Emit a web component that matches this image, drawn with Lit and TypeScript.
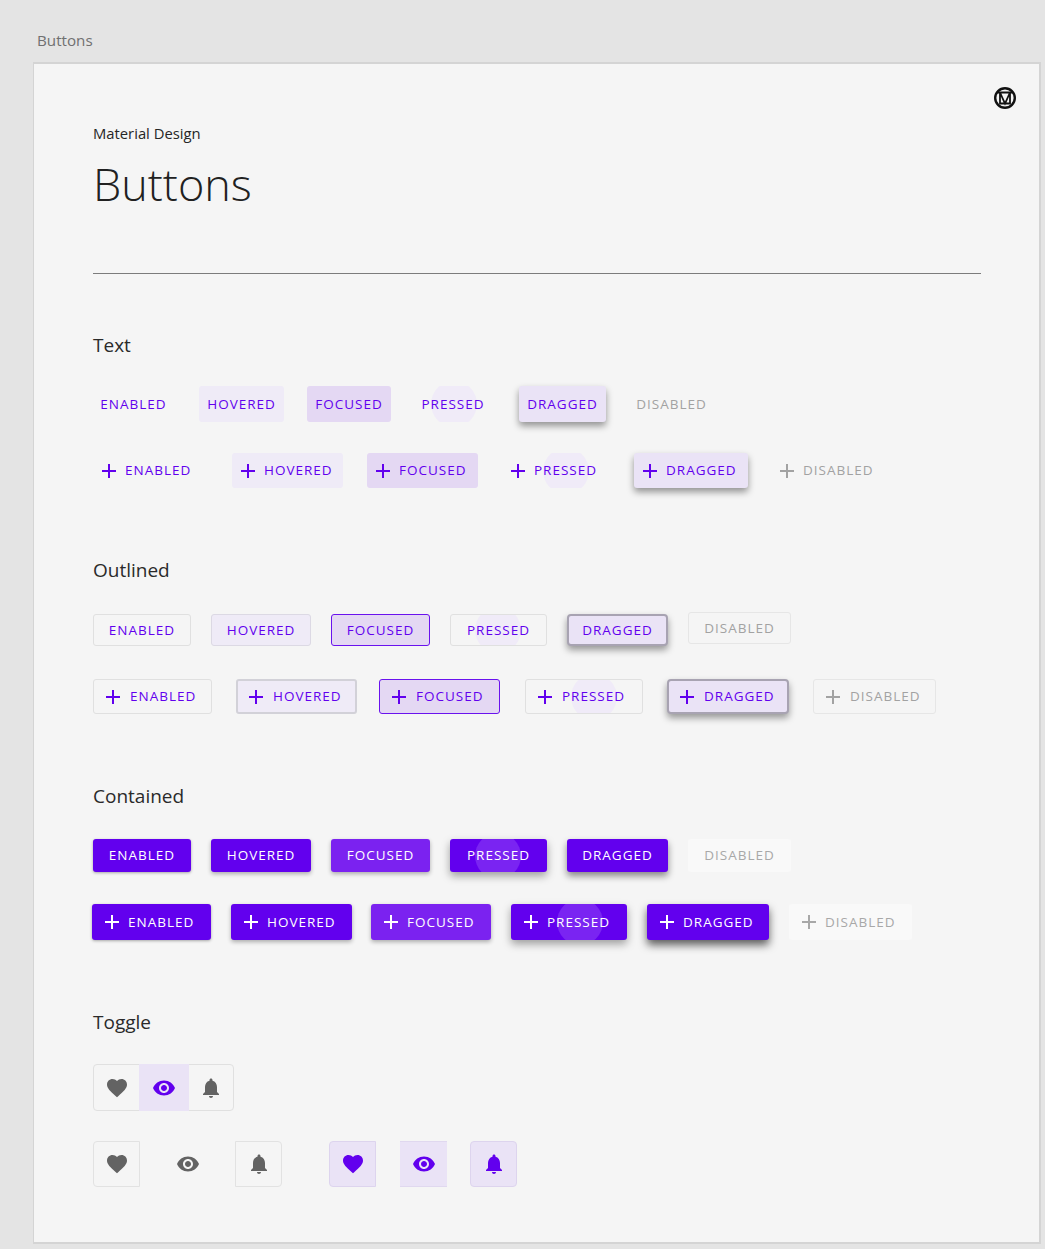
import { LitElement, html, css, nothing } from "lit";
import { customElement } from "lit/decorators.js";

const PLUS = "M19 13h-6v6h-2v-6H5v-2h6V5h2v6h6v2z";
const HEART = "M12 21.35l-1.45-1.32C5.4 15.36 2 12.28 2 8.5 2 5.42 4.42 3 7.5 3c1.74 0 3.41.81 4.5 2.09C13.09 3.81 14.76 3 16.5 3 19.58 3 22 5.42 22 8.5c0 3.78-3.4 6.86-8.55 11.54L12 21.35z";
const EYE = "M12 4.5C7 4.5 2.73 7.61 1 12c1.73 4.39 6 7.5 11 7.5s9.27-3.11 11-7.5c-1.73-4.39-6-7.5-11-7.5zM12 17c-2.76 0-5-2.24-5-5s2.24-5 5-5 5 2.24 5 5-2.24 5-5 5zm0-8c-1.66 0-3 1.34-3 3s1.34 3 3 3 3-1.34 3-3-1.34-3-3-3z";
const BELL = "M12 22c1.1 0 2-.9 2-2h-4c0 1.1.89 2 2 2zm6-6v-5c0-3.07-1.64-5.64-4.5-6.32V4c0-.83-.67-1.5-1.5-1.5s-1.5.67-1.5 1.5v.68C7.63 5.36 6 7.92 6 11v5l-2 2v1h16v-1l-2-2z";

const icon = (d: string) => html`<svg class="ico" viewBox="0 0 24 24"><path d=${d}></path></svg>`;

const STATES = ["enabled", "hovered", "focused", "pressed", "dragged", "disabled"];

type Row = { kind: string; withIcon: boolean; xs: number[]; ws: number[]; rippleX?: number };

const ROWS: Record<string, Row[]> = {
  Text: [
    { kind: "text", withIcon: false, xs: [93, 199, 307, 414, 519, 629], ws: [81, 85, 84, 78, 87, 85], rippleX: 454 },
    { kind: "text", withIcon: true, xs: [93, 232, 367, 502, 634, 771], ws: [115, 111, 111, 106, 114, 115], rippleX: 566 },
  ],
  Outlined: [
    { kind: "outlined", withIcon: false, xs: [93, 211, 331, 450, 567, 688], ws: [98, 100, 99, 97, 101, 103], rippleX: 497 },
    { kind: "outlined", withIcon: true, xs: [93, 236, 379, 525, 667, 813], ws: [119, 121, 121, 118, 122, 123], rippleX: 593 },
  ],
  Contained: [
    { kind: "contained", withIcon: false, xs: [93, 211, 331, 450, 567, 688], ws: [98, 100, 99, 97, 101, 103], rippleX: 498 },
    { kind: "contained", withIcon: true, xs: [92, 231, 371, 511, 647, 789], ws: [119, 121, 120, 116, 122, 123], rippleX: 580 },
  ],
};

@customElement("app-root")
export class AppRoot extends LitElement {
  static styles = css`
    :host { display: block; width: 1045px; height: 1249px; background: #e4e4e4; font-family: "Open Sans", "Noto Sans", sans-serif; overflow: hidden; }
    .crumb { height: 62px; box-sizing: border-box; padding: 29px 0 0 37px; font-size: 15.2px; line-height: 22px; color: #707070; }
    .card { position: relative; box-sizing: border-box; width: 1008px; height: 1182px; margin-left: 33px; border: 2px solid #d4d4d4; border-width: 2px 2px 2px 1px; background: #f5f5f5; padding: 59px 0 0 59px; }
    .logo { position: absolute; right: 22px; top: 22px; width: 24px; height: 24px; }
    .eyebrow { font-size: 14.8px; line-height: 20px; color: #262626; }
    h1 { margin: 9px 0 0; font-size: 45px; line-height: 64px; font-weight: 300; color: #212121; }
    hr { margin: 57px 0 0; width: 888px; height: 1px; border: 0; background: #7c7c7c; }
    h2 { margin: 70px 0 0; font-size: 19px; line-height: 24px; font-weight: 400; color: #2a2a2a; }
    hr + h2 { margin-top: 59px; }
    .rows { display: flex; flex-direction: column; }
    .rows.Text { margin-top: 29px; gap: 31px; }
    .rows.Outlined { margin-top: 32px; gap: 33px; }
    .rows.Contained { margin-top: 31px; gap: 32px; }
    .row { display: flex; align-items: flex-start; }
    .btn { position: relative; box-sizing: border-box; display: flex; align-items: center; justify-content: center; height: 36px; border-radius: 3px; font-size: 13.5px; letter-spacing: 1px; color: #6200ee; white-space: nowrap; }
    .inner { position: absolute; inset: 0; overflow: hidden; border-radius: inherit; }
    .ripple { position: absolute; top: 50%; width: 46px; height: 46px; margin: -23px 0 0 -23px; border-radius: 50%; }
    .label, .ico { position: relative; }
    .label { padding-bottom: 1px; }
    .ico { width: 24px; height: 24px; flex: none; fill: currentColor; }
    .wi { justify-content: flex-start; height: 35px; }

    .text.wi { padding-left: 4px; gap: 4px; }
    .text.hovered { background: #efebf7; }
    .text.focused { background: #e4d8f3; }
    .text .ripple { background: #f0ebf8; }
    .text.dragged { background: #eae3f6; box-shadow: 0 4px 7px rgba(0,0,0,.4); }
    .disabled { color: #a2a2a2; }

    .outlined { border: 1px solid #e0e0e0; height: 32px; }
    .outlined.wi { height: 35px; padding-left: 7px; gap: 5px; }
    .outlined.hovered { background: #efebf7; border-color: #dcd9e4; }
    .outlined.hovered.wi { border: 2px solid #d2d1d8; padding-left: 6px; }
    .outlined.focused { background: #e4d8f3; border-color: #6a12ee; }
    .outlined .ripple { background: #f0ebf8; }
    .outlined.dragged { background: #eae3f6; border: 2px solid #a8a3b2; border-radius: 4px; box-shadow: 0 4px 7px rgba(0,0,0,.38); }
    .outlined.dragged.wi { padding-left: 6px; }
    .outlined.disabled { margin-top: -2px; border-color: #e6e6e6; }
    .outlined.disabled.wi { margin-top: 0; }

    .contained { background: #6200ee; color: #fff; height: 33px; box-shadow: 0 1px 3px rgba(0,0,0,.32); }
    .contained.wi { height: 36px; padding-left: 8px; gap: 4px; }
    .contained.focused { background: #7b22f0; }
    .contained.hovered { box-shadow: 0 2px 4px rgba(0,0,0,.3); }
    .contained.focused { box-shadow: 0 2px 4px rgba(0,0,0,.3); }
    .contained .ripple { background: #7a24f2; }
    .contained.pressed { box-shadow: 0 4px 8px rgba(0,0,0,.36); }
    .contained.dragged { box-shadow: 0 4px 7px rgba(0,0,0,.45); }
    .contained.dragged.wi { box-shadow: 0 5px 8px rgba(0,0,0,.62); }
    .contained.disabled { background: #f9f9f9; color: #a8a8a8; box-shadow: none; }

    .toggles { margin-top: 30px; display: flex; flex-direction: column; gap: 30px; }
    .group { display: flex; width: 141px; height: 47px; box-sizing: border-box; border: 1px solid #e0e0e0; border-radius: 4px; }
    .cell { display: flex; align-items: center; justify-content: center; color: #636363; }
    .group .cell { flex: 1 1 0; }
    .group .cell:first-child { flex: 0 0 46px; }
    .group .cell.on { flex: 0 0 50px; margin: -1px 0 -1px -1px; background: #eae3f6; color: #6200ee; }
    .singles { display: flex; }
    .tg { box-sizing: border-box; width: 47px; height: 46px; border: 1px solid #e2e2e2; }
    .tg + .tg { margin-left: 24px; }
    .tg.eight { margin-left: 47px; }
    .tg.left { border-radius: 4px 0 0 4px; }
    .tg.mid { border-width: 1px 0; border-color: transparent; }
    .tg.right { border-radius: 0 4px 4px 0; }
    .tg.sel { background: #eae3f6; color: #6200ee; border-color: #ddd4ee; }
    .tg.sel.mid { border-color: #e0d8ef; }
    .tg.sel.right { border-radius: 4px; margin-left: 23px; }
  `;

  private renderRow(r: Row) {
    return html`<div class="row">
      ${STATES.map((s, i) => {
        const prevEnd = i === 0 ? 93 : r.xs[i - 1] + r.ws[i - 1];
        const style = `width:${r.ws[i]}px;margin-left:${r.xs[i] - prevEnd}px`;
        return html`<div class="btn ${r.kind} ${s} ${r.withIcon ? "wi" : ""}" style=${style}>
          ${s === "pressed"
            ? html`<div class="inner"><div class="ripple" style="left:${r.rippleX! - r.xs[i]}px"></div></div>`
            : nothing}
          ${r.withIcon ? icon(PLUS) : nothing}
          <span class="label">${s.toUpperCase()}</span>
        </div>`;
      })}
    </div>`;
  }

  render() {
    return html`
      <div class="crumb">Buttons</div>
      <div class="card">
        <svg class="logo" viewBox="0 0 24 24" fill="none" stroke="#111" stroke-width="2.4">
          <circle cx="12" cy="12" r="9.8"></circle>
          <path d="M5 6.5h14M7 6.5v11h10v-11M7 6.5l5 11 5-11" stroke-width="1.8"></path>
        </svg>
        <div class="eyebrow">Material Design</div>
        <h1>Buttons</h1>
        <hr />
        ${Object.keys(ROWS).map(
          (name) => html`<h2>${name}</h2>
            <div class="rows ${name}">${ROWS[name].map((r) => this.renderRow(r))}</div>`
        )}
        <h2>Toggle</h2>
        <div class="toggles">
          <div class="group">
            <div class="cell">${icon(HEART)}</div>
            <div class="cell on">${icon(EYE)}</div>
            <div class="cell">${icon(BELL)}</div>
          </div>
          <div class="singles">
            <div class="cell tg left">${icon(HEART)}</div>
            <div class="cell tg mid">${icon(EYE)}</div>
            <div class="cell tg right">${icon(BELL)}</div>
            <div class="cell tg eight sel left">${icon(HEART)}</div>
            <div class="cell tg sel mid">${icon(EYE)}</div>
            <div class="cell tg sel right">${icon(BELL)}</div>
          </div>
        </div>
      </div>
    `;
  }
}
